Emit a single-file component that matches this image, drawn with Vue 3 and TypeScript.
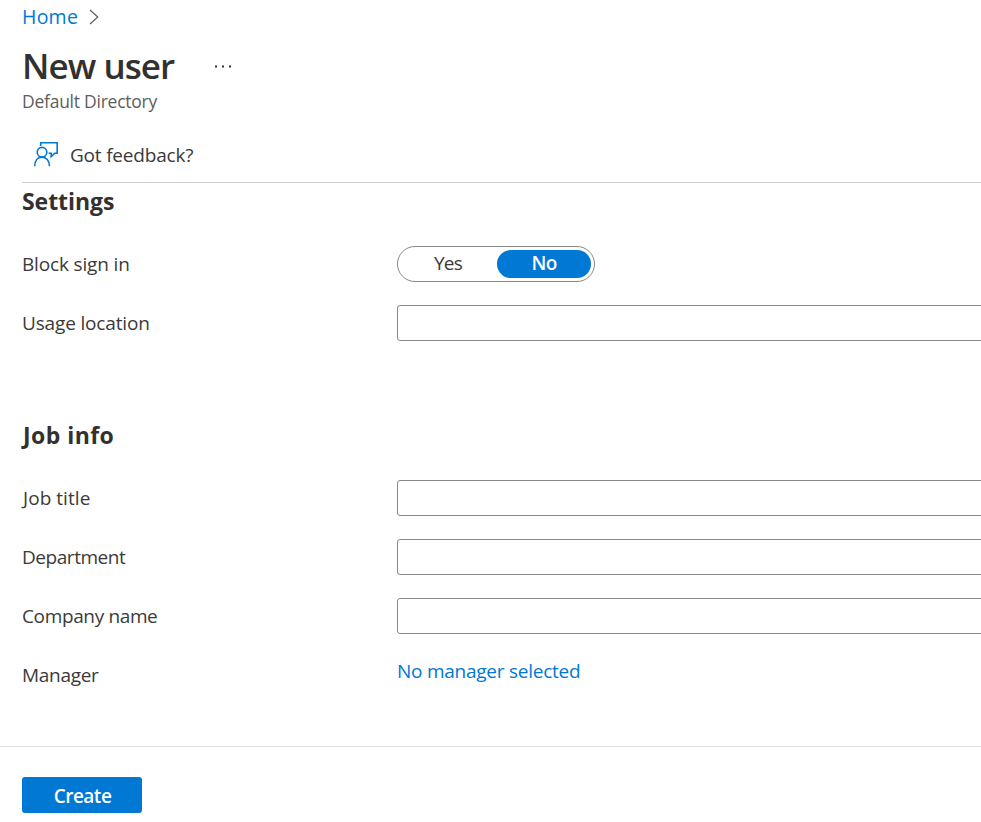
<script setup lang="ts">
import { reactive, ref } from 'vue'

interface Field {
  id: string
  label: string
}

const jobFields: Field[] = [
  { id: 'jobTitle', label: 'Job title' },
  { id: 'department', label: 'Department' },
  { id: 'companyName', label: 'Company name' },
]

const values = reactive<Record<string, string>>({
  usageLocation: '',
  jobTitle: '',
  department: '',
  companyName: '',
})

const blocked = ref(false)
</script>

<template>
  <div class="page">
    <nav class="breadcrumb">
      <a class="home">Home</a>
      <svg class="chevron" width="10" height="16" viewBox="0 0 10 16">
        <path d="M1 1 L8.8 8 L1 15" fill="none" stroke="#605e5c" stroke-width="1.2" />
      </svg>
    </nav>

    <header class="heading">
      <div class="title-row">
        <h1>New user</h1>
        <svg class="more" width="18" height="3" viewBox="0 0 18 3">
          <path d="M1 .5h2v2h-2z M8 .5h2v2h-2z M15 .5h2v2h-2z" fill="#323130" />
        </svg>
      </div>
      <p class="subtitle">Default Directory</p>
    </header>

    <div class="toolbar">
      <svg width="26" height="26" viewBox="0 0 26 26" fill="none" stroke="#0078d4" stroke-width="1.6">
        <circle cx="9" cy="11.2" r="4.8" />
        <path d="M1.7 25.2 C1.8 19.6 4.8 16.1 9 16.1 S16.4 19.6 16.5 25.2" />
        <path d="M7.7 5 V1.8 H24.2 V12.2 H21.8 L18.2 15.7 V12.2 H15.6" />
      </svg>
      <span class="feedback">Got feedback?</span>
    </div>

    <main class="form">
      <h2>Settings</h2>
      <div class="row">
        <span class="label settings">Block sign in</span>
        <div class="toggle">
          <button :class="{ on: blocked }" @click="blocked = true">Yes</button>
          <button :class="{ on: !blocked }" @click="blocked = false">No</button>
        </div>
      </div>
      <div class="row">
        <label class="label settings" for="usageLocation">Usage location</label>
        <input id="usageLocation" v-model="values.usageLocation" type="text" />
      </div>

      <h2 class="job">Job info</h2>
      <div v-for="f in jobFields" :key="f.id" class="row">
        <label class="label" :class="f.id" :for="f.id">{{ f.label }}</label>
        <input :id="f.id" v-model="values[f.id]" type="text" />
      </div>
      <div class="row">
        <span class="label">Manager</span>
        <a class="manager">No manager selected</a>
      </div>
    </main>

    <footer class="footer">
      <button class="create">Create</button>
    </footer>
  </div>
</template>

<style>
body {
  background: #fff;
  overflow: hidden;
}
</style>

<style scoped>
.page {
  display: flex;
  flex-direction: column;
  height: 822px;
  overflow: hidden;
  font-family: 'Segoe UI', 'Open Sans', 'Noto Sans', sans-serif;
  font-size: 19px;
  line-height: 26px;
  letter-spacing: -0.3px;
  color: #3b3a39;
}
* {
  box-sizing: border-box;
}
h1,
h2,
p {
  margin: 0;
}
button,
input {
  font: inherit;
  letter-spacing: inherit;
  color: inherit;
}
.breadcrumb {
  display: flex;
  align-items: center;
  gap: 11px;
  height: 33px;
  padding-left: 22px;
}
.home,
.manager {
  color: #0078d4;
}
.home {
  font-size: 19.5px;
  letter-spacing: 0.25px;
}
.heading {
  height: 93px;
  padding: 9px 0 0 22px;
}
.title-row {
  display: flex;
  align-items: center;
  height: 48px;
}
h1 {
  width: 192px;
  font-size: 35px;
  line-height: 48px;
  font-weight: 600;
  letter-spacing: -0.95px;
  color: #323130;
}
.subtitle {
  margin-top: -1px;
  font-size: 17.5px;
  line-height: 24px;
  letter-spacing: -0.25px;
  color: #605e5c;
}
.toolbar {
  display: flex;
  align-items: center;
  gap: 11px;
  height: 57px;
  margin-left: 22px;
  padding-left: 11px;
  border-bottom: 1px solid #d2d0ce;
}
.feedback {
  margin-top: 2px;
  letter-spacing: -0.2px;
}
.form {
  height: 563px;
  margin-top: -1px;
  margin-bottom: 1px;
  padding-left: 22px;
}
h2 {
  height: 52px;
  font-size: 23px;
  line-height: 38px;
  font-weight: 700;
  letter-spacing: -0.05px;
  color: #323130;
}
h2.job {
  margin-top: 64px;
  padding-left: 1px;
  letter-spacing: 0.45px;
}
.row {
  display: flex;
  align-items: center;
  height: 59px;
}
.label {
  width: 375px;
  flex: none;
}
.label.settings {
  letter-spacing: -0.16px;
}
.label.jobTitle {
  padding-left: 1px;
  letter-spacing: 0.05px;
}
.label.department {
  letter-spacing: -0.45px;
}
.label.companyName {
  letter-spacing: -0.36px;
}
input {
  flex: none;
  width: 620px;
  height: 36px;
  padding: 0 10px;
  border: 1px solid #8a8886;
  border-radius: 3px;
  outline: none;
}
.toggle {
  display: flex;
  justify-content: space-between;
  width: 198px;
  height: 36px;
  padding: 3px;
  border: 1px solid #8a8886;
  border-radius: 18px;
}
.toggle button {
  width: 94px;
  padding: 0 0 2px;
  border: 0;
  border-radius: 14px;
  background: none;
  letter-spacing: -0.8px;
}
.toggle button.on {
  background: #0078d4;
  color: #fff;
  font-weight: 600;
}
.manager {
  margin-top: -8px;
  letter-spacing: -0.25px;
}
.footer {
  flex: 1;
  padding: 30px 22px 0;
  border-top: 1px solid #e1dfdd;
}
.create {
  width: 120px;
  height: 36px;
  padding: 1px 0 0 1px;
  border: 0;
  border-radius: 3px;
  background: #0078d4;
  color: #fff;
  font-weight: 600;
  letter-spacing: -0.5px;
}
</style>
